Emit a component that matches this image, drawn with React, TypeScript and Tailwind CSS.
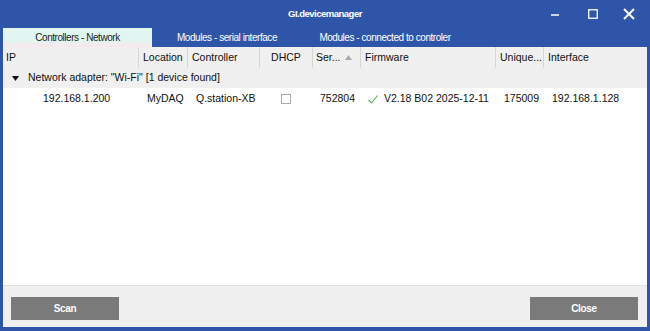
const cols = 'grid grid-cols-[135px_49px_72px_53px_48px_135px_48px_1fr]'

const headers = ['IP', 'Location', 'Controller', 'DHCP', 'Ser...', 'Firmware', 'Unique...', 'Interface']

function SortUp() {
  return (
    <svg width="7" height="5" viewBox="0 0 7 5" className="ml-[4px]">
      <polygon points="3.5,0 7,5 0,5" fill="#a8a8a8" />
    </svg>
  )
}

function TitleBar() {
  return (
    <div className="grid h-[28px] grid-cols-[1fr_auto_1fr] items-center text-white">
      <div />
      <div className="text-[9.5px] font-bold tracking-[-0.5px]">GI.devicemanager</div>
      <div className="flex items-center justify-end pr-[12px]">
        <svg width="10" height="10" viewBox="0 0 10 10" className="mr-[28px]">
          <line x1="1" y1="6" x2="9" y2="6" stroke="white" strokeWidth="1.5" />
        </svg>
        <svg width="10" height="10" viewBox="0 0 10 10" className="mr-[25px]">
          <rect x="0.75" y="0.75" width="8.5" height="8.5" fill="none" stroke="white" strokeWidth="1.3" />
        </svg>
        <svg width="12" height="12" viewBox="0 0 12 12">
          <path d="M1 1 L11 11 M11 1 L1 11" stroke="white" strokeWidth="2" />
        </svg>
      </div>
    </div>
  )
}

function Tabs() {
  return (
    <div className="flex h-[19px] text-[10px] tracking-[-0.45px]">
      <div className="flex w-[149px] items-center justify-center bg-[linear-gradient(#e1f6f0_65%,#fbe6ee)] text-[#222]">
        Controllers - Network
      </div>
      <div className="flex w-[150px] items-center justify-center text-white">Modules - serial interface</div>
      <div className="flex w-[166px] items-center justify-center text-white">Modules - connected to controler</div>
    </div>
  )
}

function Table() {
  return (
    <div className="text-[10.5px] text-[#111]">
      <div className={`${cols} h-[21px] bg-[#f0f0f0]`}>
        {headers.map((h, i) => (
          <div
            key={h}
            className={`flex items-center ${i > 0 ? 'border-l border-[#d6d6d6]' : ''} ${
              i === 3 ? 'justify-center' : i === 0 ? 'pl-[3px]' : i === 4 ? 'pl-[3px]' : 'pl-[4px]'
            }`}
          >
            {h}
            {i === 4 && <SortUp />}
          </div>
        ))}
      </div>
      <div className="flex h-[20px] items-center bg-[#f0f0f0] pl-[9px]">
        <svg width="7" height="5" viewBox="0 0 7 5" className="mr-[9px]">
          <polygon points="0,0 7,0 3.5,5" fill="#111" />
        </svg>
        Network adapter: "Wi-Fi" [1 device found]
      </div>
      <div className={`${cols} h-[22px] items-center bg-white`}>
        <div className="pl-[40px]">192.168.1.200</div>
        <div className="pl-[9px]">MyDAQ</div>
        <div className="pl-[9px]">Q.station-XB</div>
        <div className="flex justify-center">
          <div className="h-[10px] w-[10px] border border-[#a9a9a9] bg-white" />
        </div>
        <div className="pl-[8px]">752804</div>
        <div className="flex items-center pl-[8px]">
          <svg width="10" height="9" viewBox="0 0 10 9" className="mr-[6px]">
            <polyline points="0.5,5 3.5,8 9.5,0.5" fill="none" stroke="#5aae5a" strokeWidth="1.1" />
          </svg>
          V2.18 B02 2025-12-11
        </div>
        <div className="pl-[9px]">175009</div>
        <div className="pl-[9px]">192.168.1.128</div>
      </div>
    </div>
  )
}

export default function App() {
  return (
    <div
      className="flex h-[331px] w-[650px] flex-col bg-[#2f55a9] px-[3px] pb-[4px]"
      style={{ fontFamily: '"Liberation Sans", Arial, sans-serif' }}
    >
      <TitleBar />
      <Tabs />
      <div className="flex flex-1 flex-col bg-white">
        <Table />
        <div className="flex-1 bg-white" />
        <div className="flex h-[42px] items-start justify-between border-t border-[#e2e2e2] bg-[#f0f0f0] pl-[8px] pr-[9px] pt-[11px]">
          <button className="h-[23px] w-[108px] bg-[#7a7a7a] text-[10px] font-bold tracking-[-0.3px] text-white">
            Scan
          </button>
          <button className="h-[23px] w-[108px] bg-[#7a7a7a] text-[10px] font-bold tracking-[-0.3px] text-white">
            Close
          </button>
        </div>
      </div>
    </div>
  )
}
